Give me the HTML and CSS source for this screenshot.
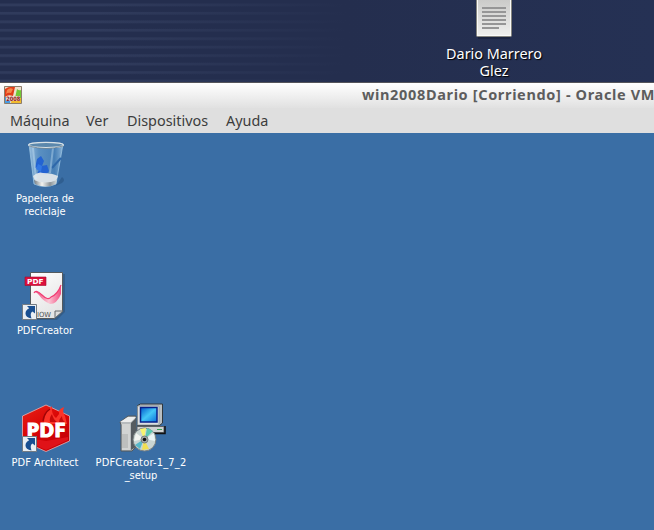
FILE: index.html
```html
<!DOCTYPE html>
<html lang="es">
<head>
<meta charset="utf-8">
<title>win2008Dario</title>
<link rel="stylesheet" href="styles.css">
</head>
<body>
<header class="host">
  <div class="document">
    <svg width="38" height="40" viewBox="0 0 38 40">
      <defs><linearGradient id="paper" x2="0" y2="1"><stop stop-color="#c9c9c7"/><stop offset="1" stop-color="#f0f0ee"/></linearGradient></defs>
      <path d="M3 37h32v2H3z" fill="#111a30" opacity=".5"/>
      <path d="M1.500-2h35v37.500q0 1-1 1h-33q-1 0-1-1z" fill="url(#paper)" stroke="#85857f"/>
      <path d="M2.500 0v35.500h33V0" fill="none" stroke="#fafaf8"/>
      <path d="M7 8h24M7 12h24M7 16h24M7 20h24M7 24h24M7 28h17" stroke="#969696" stroke-width="2"/>
    </svg>
    <span class="document-name">Dario Marrero<br>Glez</span>
  </div>
</header>
<main class="window">
  <div class="titlebar">
    <svg class="os-icon" width="18" height="18" viewBox="0 0 18 18">
      <path d="M0 0h18v18H0z" fill="#eee0cd"/>
      <path d="M1 3Q5 0 11 1L9 10Q4 8 1 11z" fill="#e23d18"/>
      <path d="M3 4Q6 1 9 3L7 7Q4 6 2 8z" fill="#f5884c"/>
      <path d="M13 3q2 2 4 1v8h-6z" fill="#72c936"/>
      <path d="M1 11h6l-1 6H1z" fill="#4a9be0"/>
      <path d="M8 12h9v5H7z" fill="#f3bc2d"/>
      <path d="M2 10h14v5H2z" fill="#f5ddcf" opacity=".85"/>
      <path d="M.5.5h17v17H.5z" fill="none" stroke="#8c7d6c"/>
      <text x="2.300" y="15" class="os-year" textLength="14" lengthAdjust="spacingAndGlyphs">2008</text>
    </svg>
    <span class="title">win2008Dario [Corriendo] - Oracle VM</span>
  </div>
  <nav class="menu"><span class="maquina">Máquina</span><span class="ver">Ver</span><span class="dispositivos">Dispositivos</span><span class="ayuda">Ayuda</span></nav>
  <section class="guest">
    <div class="shortcut">
      <svg class="bin" width="48" height="50" viewBox="0 0 48 50">
        <defs>
          <linearGradient id="glass"><stop stop-color="#b9d8ef" stop-opacity=".75"/><stop offset=".3" stop-color="#75acd9" stop-opacity=".55"/><stop offset=".75" stop-color="#5793c9" stop-opacity=".5"/><stop offset="1" stop-color="#a7cae6" stop-opacity=".8"/></linearGradient>
          <linearGradient id="base"><stop stop-color="#747d84"/><stop offset=".35" stop-color="#f3f3f0"/><stop offset=".7" stop-color="#8b9398"/><stop offset="1" stop-color="#d1dadd"/></linearGradient>
        </defs>
        <path d="M36 43l4-6q4 3 0 6l-7 3z" fill="#234d7b" opacity=".5"/>
        <path d="M7 4l5 40q11 5 22 0l7-40q-17 5-34 0z" fill="url(#glass)" stroke="#9bc4e2" stroke-width=".8"/>
        <path d="M15 19l4-3 3 5-2 5-7 2zM19 26l6-1 2 6-3 4-9-1z" fill="#2363d2"/>
        <path d="M16 24l4 2-1 6-5-3z" fill="#3277e4"/>
        <path d="M39 18l-9 10" stroke="#2e68aa" stroke-width="2"/>
        <path d="M11 36q5-5 10-3 9 0 15 3l-2 5q-11 6-21 0z" fill="#e4e8ea" opacity=".92"/>
        <path d="M12 40q11 5 23 0l-1 4q-10 5-21 0z" fill="url(#base)"/>
        <path d="M31 8l-3 25M11 8l3 31" stroke="#d9f0fd" opacity=".35" stroke-width="2"/>
        <ellipse cx="24" cy="5" rx="17.300" ry="2.600" fill="#5c88ac" stroke="#d9e2e7" stroke-width="1.400"/>
        <path d="M7 6q17 5 34 0" fill="none" stroke="#687d8c" stroke-width=".8"/>
      </svg>
      <span class="label"><span class="line papelera">Papelera de</span><span class="line reciclaje">reciclaje</span></span>
    </div>
    <div class="shortcut creator">
      <svg width="48" height="50" viewBox="0 0 48 50">
        <defs><linearGradient id="sheet" x2=".5" y2="1"><stop stop-color="#fff"/><stop offset="1" stop-color="#e5e5e5"/></linearGradient><linearGradient id="swoosh"><stop stop-color="#ef326c"/><stop offset=".55" stop-color="#fac7d5"/><stop offset="1" stop-color="#f24c80"/></linearGradient></defs>
        <path d="M11 2h33v38l-8 8H11z" fill="#293f55" opacity=".35"/>
        <path d="M9.500.500h32v38l-8 8h-24z" fill="url(#sheet)" stroke="#555b5e"/>
        <path d="M13 21Q16 17 21 23T31 24Q37 22 40 13V22Q36 32 29 32 22 29 18 23 15 19 13 21z" fill="url(#swoosh)"/>
        <path d="M13 21Q15 17 21 23T30 25Q37 22 40 13" fill="none" stroke="#f13c72" stroke-width="1.200"/>
        <path d="M34 46v-7h8z" fill="#ddd" stroke="#65696b"/>
        <path d="M4 5h21v8.500H4z" fill="#dd103c" stroke="#a30b2c" stroke-width=".6"/>
        <text class="pdf-tag" x="6" y="12" textLength="16.500" lengthAdjust="spacingAndGlyphs">PDF</text>
        <text class="now-tag" x="16" y="44.500" textLength="14" lengthAdjust="spacingAndGlyphs">IOW</text>
        <g id="arrow"><path d="M1.500 32.500h14v15h-14z" fill="#e9eef3" stroke="#737b83"/><path d="M6 34h8v7.500l-2.500-2Q8.500 41 10.500 46.500 4.500 45.500 4.500 41.500q0-3.500 3.700-5.200z" fill="#194f91"/></g>
      </svg>
      <span class="label"><span class="line pdfcreator">PDFCreator</span></span>
    </div>
    <div class="shortcut architect">
      <svg class="architect-icon" width="50" height="50" viewBox="0 0 50 50">
        <defs><linearGradient id="cube" x2=".6" y2="1"><stop stop-color="#e92318"/><stop offset=".5" stop-color="#d90606"/><stop offset="1" stop-color="#c40008"/></linearGradient></defs>
        <path d="M25 1l23.500 11v25L25 47.500 1.500 37V12z" fill="url(#cube)" stroke="#e8b0af" stroke-width=".8"/>
        <path d="M23 20q-1-10 8-18-1 8 4 12l3-4q-1-5 5-7-2 6 1 9l2 8z" fill="#fb3328"/>
        <path d="M22 17Q23 9 29 5" fill="none" stroke="#9f0507" stroke-width="1.500"/>
        <path d="M29 18q-1-4 2-8 1 5 5 8zM38 18q0-3 3-6 0 4 3 6z" fill="#c50a0a"/>
        <path d="M3 33l22 4 22-4v3L25 46 3 36z" fill="#e01218"/>
        <text class="pdf-big" x="5.500" y="32.500" textLength="39" lengthAdjust="spacingAndGlyphs">PDF</text>
        <use href="#arrow"/>
      </svg>
      <span class="label"><span class="line pdfarchitect">PDF Architect</span></span>
    </div>
    <div class="shortcut setup">
      <svg class="setup-icon" width="50" height="50" viewBox="0 0 50 50">
        <defs><linearGradient id="screen" x2="1" y2="1"><stop stop-color="#0058cb"/><stop offset=".5" stop-color="#43c6f6"/><stop offset="1" stop-color="#086edc"/></linearGradient></defs>
        <path d="M18 22.500h27v6H18z" fill="#d0d2d3" stroke="#5c6064"/>
        <path d="M46 22v7.500H30" fill="none" stroke="#111" stroke-width="1.500"/>
        <path d="M18.500 1.500l3-1.500h22v19l-3 2.500h-22z" fill="#b9bfc2" stroke="#30373c"/>
        <path d="M18.500 2h21.500v19H18.500z" fill="#dce0e2" stroke="#858e94" stroke-width=".7"/>
        <path d="M21.500 3.500h16.500v14.500h-16.500z" fill="url(#screen)" stroke="#07208a" stroke-width="1.500"/>
        <path d="M38 25.500h5" stroke="#37a657"/>
        <path d="M1 18l8-6h8v31l-4 4H2V21z" fill="#b7bbbd" stroke="#53595d"/>
        <path d="M1 18l8-5h8l-5 5z" fill="#eceded"/>
        <path d="M12 19l5-5v29l-5 3z" fill="#555b60"/>
        <path d="M3 20h8v26H3z" fill="#d2d4d3"/>
        <path d="M4 30v14M6 30v14M8 30v14" stroke="#999" stroke-width=".7"/>
        <circle cx="25.500" cy="35.500" r="11.500" fill="#c9d5d3" stroke="#777e7f"/>
        <path d="M25 35L21 25l6-1z" fill="#f7f36e"/>
        <path d="M26 35l2-11 6 3z" fill="#5ac8b2"/>
        <path d="M26 35l9-6 1 8z" fill="#e9f4f6"/>
        <path d="M25 35l5 10-7 1z" fill="#f1df51"/>
        <path d="M25 35l-4 10-5-4z" fill="#56b7c9"/>
        <path d="M25 35l-10 2 2-8z" fill="#f3f5f2"/>
        <circle cx="25.500" cy="35.500" r="3.500" fill="#a5aaaa" stroke="#777e7e"/>
        <circle cx="25.500" cy="35.500" r="1.800" fill="#111"/>
      </svg>
      <span class="label"><span class="line setup-name">PDFCreator-1_7_2</span><span class="line setup-end">_setup</span></span>
    </div>
  </section>
</main>
</body>
</html>
```
FILE: styles.css
```css
* { box-sizing: border-box; }
body { margin: 0; width: 654px; height: 530px; overflow: hidden; }
svg { display: block; overflow: visible; }
.line { display: block; white-space: nowrap; width: max-content; }

.host {
  height: 82px;
  overflow: hidden;
  background:
    linear-gradient(90deg, transparent 15%, #242e4e 53%, #253154),
    repeating-linear-gradient(#242e4e 0, #242e4e 3px, #303b5c 4px, #303b5c 5.5px, #242e4e 7px, #242e4e 8.46px);
}
.document { width: 120px; margin-left: 434px; display: flex; flex-direction: column; align-items: center; }
.document-name {
  margin-top: 5px;
  text-align: center;
  font: 14.4px/17px "Noto Sans", sans-serif;
  color: #fff;
  text-shadow: 1px 1px 1px #000;
}

.window { height: 448px; display: flex; flex-direction: column; border-top: 1px solid #55555b; }
.titlebar {
  height: 25px; flex: none; display: flex; overflow: hidden;
  padding: 3px 0 0 4px;
  background: linear-gradient(#fff, #e1e1e1);
}
.os-icon { flex: none; }
.os-year { font: bold 6px "DejaVu Sans", sans-serif; fill: #8f1626; }
.title {
  margin-left: 340px; margin-top: -2px; white-space: nowrap;
  font: bold 14.5px/20px "Noto Sans", sans-serif;
  letter-spacing: .65px; color: #5d5d5d;
}
.menu {
  height: 25px; flex: none; display: flex; padding-left: 10px;
  background: #dfdfdf; color: #3c3c3c;
  font: 14.4px/25px "Noto Sans", sans-serif;
}
.maquina { width: 76px; }
.ver { width: 41px; }
.dispositivos { width: 99px; }

.guest {
  flex: 1; background: #3a6ea5;
  display: grid; grid-template-columns: 96px 96px; grid-template-rows: repeat(3, 132px);
  padding-top: 7px;
}
.shortcut { display: flex; flex-direction: column; align-items: center; padding-right: 6px; height: 90px; }
.shortcut > svg { flex: none; }
.bin { margin-left: 2px; }
.architect-icon { margin-left: 2px; }
.setup-icon { margin-left: 6px; }
.creator { grid-area: 2 / 1; }
.architect { grid-area: 3 / 1; }
.setup { grid-area: 3 / 2; }
.label {
  display: flex; flex-direction: column; align-items: center;
  margin-top: 2px;
  font: 11px/13px "DejaVu Sans Condensed", "DejaVu Sans", sans-serif;
  color: #fff;
}
.papelera { letter-spacing: -.05px; }
.setup-name { letter-spacing: .2px; }
.pdf-tag { font: bold 7px "DejaVu Sans", sans-serif; fill: #fff; }
.now-tag { font: 7px "DejaVu Sans", sans-serif; fill: #4d5254; }
.pdf-big { font: bold 20px "Open Sans", sans-serif; fill: #fff; stroke: #fff; stroke-width: 1.2px; }
```
